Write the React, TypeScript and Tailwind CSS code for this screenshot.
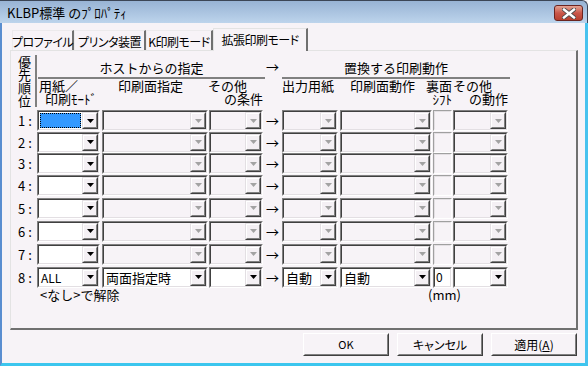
import React from "react";

type ComboProps = {
  w: string;
  on?: boolean;
  focus?: boolean;
  value?: string;
  small?: boolean;
};

// spacing above each row, taken from the dialog's uneven row pitch
const rowGaps = ["mt-0", "mt-[0.7px]", "mt-[0.6px]", "mt-[0.7px]", "mt-[2px]", "mt-[2px]", "mt-[2px]", "mt-[1.7px]"];

function Arrow({ on }: { on: boolean }) {
  return (
    <svg width="7" height="4" viewBox="0 0 7 4">
      <polygon points="0,0 7,0 3.5,4" fill={on ? "#000" : "#a3a3a3"} />
    </svg>
  );
}

function DropButton({ on }: { on: boolean }) {
  return (
    <div className="w-[16px] h-full shrink-0 flex border border-t-[#e3dfe3] border-l-[#e3dfe3] border-r-[#404040] border-b-[#404040]">
      <div className="flex-1 flex items-center justify-center bg-[#f4f0f4] border border-t-white border-l-white border-r-[#808080] border-b-[#808080]">
        <Arrow on={on} />
      </div>
    </div>
  );
}

function Combo({ w, on = false, focus = false, value = "", small = false }: ComboProps) {
  return (
    <div className={`${w} h-[21px] shrink-0 flex border border-t-[#808080] border-l-[#808080] border-r-white border-b-white`}>
      <div
        className={`flex-1 min-w-0 flex border border-t-[#404040] border-l-[#404040] border-r-[#e3dfe3] border-b-[#e3dfe3] ${
          on ? "bg-white" : "bg-[#f7f3f7]"
        }`}
      >
        <div className="flex-1 min-w-0 flex p-[1px]">
          {focus ? (
            <div className="flex-1 bg-[#3399ff] border border-dotted border-black" />
          ) : (
            <span
              className={`pl-[1px] whitespace-nowrap ${
                small ? "text-[12px] leading-[15px]" : "text-[13px] leading-[15px]"
              }`}
            >
              {value}
            </span>
          )}
        </div>
        <DropButton on={on} />
      </div>
    </div>
  );
}

function ShiftBox({ on = false, value = "" }: { on?: boolean; value?: string }) {
  return (
    <div
      className={`w-[19px] h-[21px] shrink-0 flex border ${
        on
          ? "border-t-[#808080] border-l-[#808080] border-r-white border-b-white"
          : "border-t-[#a0a0a0] border-l-[#a0a0a0] border-r-white border-b-white"
      }`}
    >
      <div
        className={`flex-1 border text-[12px] leading-[15px] pl-[1px] ${
          on
            ? "bg-white border-t-[#404040] border-l-[#404040] border-r-[#e3dfe3] border-b-[#e3dfe3]"
            : "bg-[#f7f3f7] border-t-[#e3dfe3] border-l-[#e3dfe3] border-r-[#f7f3f7] border-b-[#f7f3f7]"
        }`}
      >
        {value}
      </div>
    </div>
  );
}

function Row({ n, gap, last = false, focus = false }: { n: number; gap: string; last?: boolean; focus?: boolean }) {
  return (
    <div className={`flex items-center h-[21px] ${gap}`}>
      <div className="w-[20px] pl-[1px] text-[13px] leading-[13px] tracking-[3px]">{n}:</div>
      <Combo w="w-[63px]" on focus={focus} value={last ? "ALL" : ""} small />
      <div className="ml-[2px]">
        <Combo w="w-[106px]" on={last} value={last ? "両面指定時" : ""} />
      </div>
      <div className="ml-[1px]">
        <Combo w="w-[54px]" on={last} />
      </div>
      <div className="w-[19px] pl-[3px] text-[13px] leading-[13px]">→</div>
      <Combo w="w-[56px]" on={last} value={last ? "自動" : ""} />
      <div className="ml-[2px]">
        <Combo w="w-[92px]" on={last} value={last ? "自動" : ""} />
      </div>
      <div className="ml-[1px]">
        <ShiftBox on={last} value={last ? "0" : ""} />
      </div>
      <div className="ml-[1px]">
        <Combo w="w-[55px]" on={last} />
      </div>
    </div>
  );
}

function Tab({ label, w, active = false }: { label: string; w: string; active?: boolean }) {
  if (active) {
    return (
      <div
        className={`${w} h-[23px] -mb-[1px] relative z-10 bg-[#f7f3f7] flex items-start justify-center pt-[4px] border-t border-l border-t-[#e3e3e3] border-l-[#e3e3e3] border-r-2 border-r-[#707070] text-[12px] leading-[13px] tracking-[-0.5px] whitespace-nowrap [font-feature-settings:'palt']`}
      >
        {label}
      </div>
    );
  }
  return (
    <div
      className={`${w} h-[20px] flex items-start justify-center pt-[4px] border-t border-l border-t-[#eceaec] border-l-[#eceaec] border-r-2 border-r-[#707070] text-[12px] leading-[13px] tracking-[-0.5px] whitespace-nowrap [font-feature-settings:'palt']`}
    >
      {label}
    </div>
  );
}

function PushButton({ children, narrow = false }: { children: React.ReactNode; narrow?: boolean }) {
  return (
    <div className="w-[86px] h-[23px] flex border border-t-white border-l-white border-r-[#404040] border-b-[#404040]">
      <div
        className={`flex-1 flex items-center justify-center border border-t-[#f7f3f7] border-l-[#f7f3f7] border-r-[#808080] border-b-[#808080] whitespace-nowrap [font-feature-settings:'palt'] ${
          narrow ? "text-[11px]" : "text-[12px]"
        }`}
      >
        {children}
      </div>
    </div>
  );
}

export default function App() {
  return (
    <div className="w-[588px] h-[366px] flex flex-col bg-[#f7f3f7] text-black font-['Noto_Sans_CJK_JP',sans-serif] overflow-hidden">
      {/* title bar */}
      <div className="h-[23px] shrink-0 flex justify-between pl-[7px] pr-[4px] border-t border-r border-[#3c4656] rounded-tr-[6px] bg-linear-to-b from-[#98b3d4] to-[#bdd4ec]">
        <div className="pt-[5px] text-[13px] leading-[13px] whitespace-nowrap">KLBP標準 のﾌﾟﾛﾊﾟﾃｨ</div>
        <div className="mt-[4px] w-[29px] h-[16px] rounded-[3px] border border-[#6b2420] bg-linear-to-b from-[#e3a393] via-[#c9574a] to-[#b8402f] flex items-center justify-center">
          <svg width="14" height="11" viewBox="0 0 14 11">
            <path d="M2 1.5 L12 9.5 M12 1.5 L2 9.5" stroke="#4a4a4a" strokeWidth="4.2" strokeLinecap="square" />
            <path d="M2 1.5 L12 9.5 M12 1.5 L2 9.5" stroke="#fff" strokeWidth="2.4" strokeLinecap="square" />
          </svg>
        </div>
      </div>

      {/* body */}
      <div className="flex-1 flex flex-col pl-[8px] border-l-2 border-l-[#5a8ed0] border-r-[3px] border-r-[#48c2ee] border-b-[3px] border-b-[#3cc6ee]">
        {/* tabs */}
        <div className="h-[27px] shrink-0 flex items-end pl-[2px]">
          <Tab w="w-[62px]" label="プロファイル" />
          <Tab w="w-[72px]" label="プリンタ装置" />
          <Tab w="w-[67px]" label="K印刷モード" />
          <Tab w="w-[95px]" label="拡張印刷モード" active />
        </div>

        {/* tab panel */}
        <div className="w-[568px] h-[280px] shrink-0 flex flex-col pl-[6px] pt-[4px] border-t border-l border-t-[#e3e3e3] border-l-[#e3e3e3] border-r-2 border-b-2 border-r-[#707070] border-b-[#707070]">
          {/* header */}
          <div className="flex">
            <div className="w-[20px] h-[52px] pl-[1px] border-r-2 border-[#808080] flex flex-col text-[13px] leading-[13px]">
              <span>優</span>
              <span>先</span>
              <span>順</span>
              <span>位</span>
            </div>
            <div className="flex flex-col">
              <div className="flex h-[24px] text-[13px] leading-[13px]">
                <div className="ml-[1px] w-[227px] pt-[6px] text-center border-b-2 border-[#808080]">ホストからの指定</div>
                <div className="w-[17px] pt-[5px] pl-[1px]">→</div>
                <div className="w-[228px] pt-[6px] text-center border-b-2 border-[#808080]">置換する印刷動作</div>
              </div>
              <div className="flex text-[13px] leading-[13px] whitespace-nowrap">
                <div className="w-[63px] flex flex-col">
                  <span className="pl-[2px]">用紙／</span>
                  <span className="pl-[8px]">印刷ﾓｰﾄﾞ</span>
                </div>
                <div className="ml-[2px] w-[106px] pl-[16px]">印刷面指定</div>
                <div className="ml-[1px] w-[54px] flex flex-col">
                  <span className="-ml-[1px]">その他</span>
                  <span className="flex justify-end">の条件</span>
                </div>
                <div className="w-[19px]" />
                <div className="w-[56px]">出力用紙</div>
                <div className="ml-[2px] w-[92px] pl-[10px]">印刷面動作</div>
                <div className="ml-[1px] w-[19px] flex flex-col items-end">
                  <span>裏面</span>
                  <span>ｼﾌﾄ</span>
                </div>
                <div className="ml-[1px] w-[55px] flex flex-col">
                  <span>その他</span>
                  <span className="flex justify-end">の動作</span>
                </div>
              </div>
            </div>
          </div>

          {/* rows */}
          <div className="mt-[3px] flex flex-col">
            {[1, 2, 3, 4, 5, 6, 7, 8].map((n, i) => (
              <Row key={n} n={n} gap={rowGaps[i]} focus={n === 1} last={n === 8} />
            ))}
          </div>

          <div className="flex text-[13px] leading-[13px] whitespace-nowrap">
            <div className="w-[23px]" />
            <div className="w-[388px]">&lt;なし&gt;で解除</div>
            <div>(mm)</div>
          </div>
        </div>

        {/* buttons */}
        <div className="mt-[3px] flex justify-end gap-[8px] pr-[8px]">
          <PushButton narrow>OK</PushButton>
          <PushButton>キャンセル</PushButton>
          <PushButton>
            適用(<span className="underline">A</span>)
          </PushButton>
        </div>
      </div>
    </div>
  );
}
